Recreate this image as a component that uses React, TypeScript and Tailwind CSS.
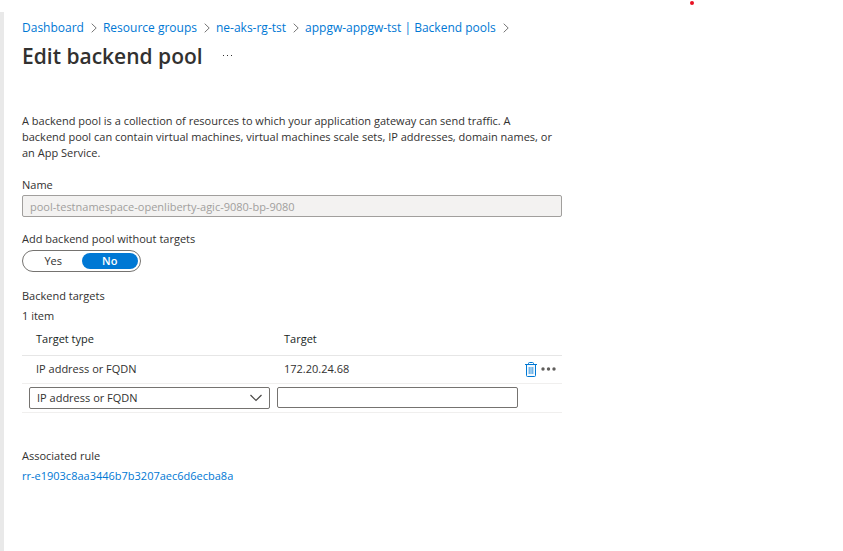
import { useState } from "react";

const crumbs = ["Dashboard", "Resource groups", "ne-aks-rg-tst", "appgw-appgw-tst | Backend pools"];

function CrumbArrow() {
  return (
    <svg className="h-[10px] w-[6px] shrink-0" viewBox="0 0 6 10" fill="none" stroke="#767676" aria-hidden="true">
      <path d="M0.7 0.7 L5.2 5 L0.7 9.3" />
    </svg>
  );
}

function Breadcrumb() {
  return (
    <nav aria-label="Breadcrumb">
      <ol className="flex flex-wrap text-[12px] leading-5 text-[#0078d4]">
        {crumbs.map((crumb) => (
          <li key={crumb} className="flex items-center gap-[7px] pr-[6px]">
            <a href="#" className="hover:underline">{crumb}</a>
            <CrumbArrow />
          </li>
        ))}
      </ol>
    </nav>
  );
}

function TrashIcon() {
  return (
    <svg className="h-[15px] w-[12px]" viewBox="0 0 12 15" fill="none" stroke="#0078d4" aria-hidden="true">
      <path d="M1.5 3 V13.5 a1 1 0 0 0 1 1 H9.5 a1 1 0 0 0 1 -1 V3" fill="#f3f9fe" />
      <path d="M0 2.5 H12" />
      <path d="M3.5 2.5 V1.5 a1 1 0 0 1 1 -1 H7.5 a1 1 0 0 1 1 1 V2.5" />
      <path d="M4.2 5 V12 M6 5 V12 M7.8 5 V12" strokeWidth="1" strokeOpacity="0.75" />
    </svg>
  );
}

function YesNoToggle() {
  const [value, setValue] = useState("No");
  return (
    <fieldset className="mt-[14px]">
      <legend className="leading-4">Add backend pool without targets</legend>
      <div className="mt-[3px] flex h-[22px] w-[119px] rounded-full border border-[#757370] p-[2px]">
        {["Yes", "No"].map((option) => (
          <label
            key={option}
            className="flex flex-1 cursor-pointer items-center justify-center rounded-full has-checked:bg-[#0078d4] has-checked:font-semibold has-checked:text-white"
          >
            <input
              type="radio"
              name="without-targets"
              className="sr-only"
              checked={value === option}
              onChange={() => setValue(option)}
            />
            {option}
          </label>
        ))}
      </div>
    </fieldset>
  );
}

function TargetsTable() {
  return (
    <table className="w-full table-fixed border-collapse text-left">
      <colgroup>
        <col className="w-[248px]" />
        <col className="w-[248px]" />
        <col />
      </colgroup>
      <thead>
        <tr className="h-[31px] border-b border-[#e6e6e6] text-[#201f1e]">
          <th className="pl-[14px] font-medium">Target type</th>
          <th className="pl-[14px] font-medium">Target</th>
          <td />
        </tr>
      </thead>
      <tbody>
        <tr className="h-7 border-b border-[#f0efee]">
          <td className="pl-[14px]">IP address or FQDN</td>
          <td className="pl-[14px]">172.20.24.68</td>
          <td>
            <div className="flex items-center gap-1 pl-[7px]">
              <button type="button" aria-label="Delete target"><TrashIcon /></button>
              <button type="button" aria-label="More actions">
                <svg className="h-[4px] w-[15px]" viewBox="0 0 15 4" fill="#605e5c" aria-hidden="true">
                  <circle cx="2" cy="2" r="1.7" />
                  <circle cx="7.5" cy="2" r="1.7" />
                  <circle cx="13" cy="2" r="1.7" />
                </svg>
              </button>
            </div>
          </td>
        </tr>
        <tr className="h-[29px] border-b border-[#f0efee]">
          <td className="pl-[7px]">
            <div className="grid items-center">
              <select
                aria-label="Target type"
                className="col-start-1 row-start-1 h-[22px] w-full appearance-none rounded-xs border border-[#757370] bg-white pl-[7px]"
              >
                <option>IP address or FQDN</option>
                <option>Virtual machine</option>
              </select>
              <svg
                className="pointer-events-none col-start-1 row-start-1 mr-2 h-[8px] w-[12px] justify-self-end"
                viewBox="0 0 12 8"
                fill="none"
                stroke="#484644"
                strokeWidth="1.2"
                aria-hidden="true"
              >
                <path d="M0.5 1 L6 6.5 L11.5 1" />
              </svg>
            </div>
          </td>
          <td className="pl-[7px]">
            <input
              type="text"
              aria-label="Target"
              className="block h-[21px] w-full rounded-xs border border-[#757370] bg-white px-[7px]"
            />
          </td>
          <td />
        </tr>
      </tbody>
    </table>
  );
}

export default function App() {
  return (
    <div className="relative min-h-screen bg-white pt-3 font-['Open_Sans','Noto_Sans',sans-serif] text-[11px] leading-4 text-[#323130]">
      <span className="absolute top-[1px] left-[690px] size-1 rounded-full bg-[#e81123]" />
      <main className="min-h-[calc(100vh-12px)] border-l-4 border-[#e9e9e9] pt-[6px] pr-4 pl-[18px]">
        <Breadcrumb />
        <header className="mt-1 flex items-center gap-5">
          <h1 className="text-[21px] leading-7 font-semibold">Edit backend pool</h1>
          <button type="button" aria-label="More options">
            <svg className="h-[2px] w-[10px]" viewBox="0 0 10 2" fill="#323130" aria-hidden="true">
              <path d="M0 0h1v1H0zM4 0h1v1H4zM8 0h1v1H8z" />
            </svg>
          </button>
        </header>
        <div className="mt-[43px] max-w-[540px]">
          <p className="pr-2">
            A backend pool is a collection of resources to which your application gateway can send traffic. A backend
            pool can contain virtual machines, virtual machines scale sets, IP addresses, domain names, or an App
            Service.
          </p>
          <label htmlFor="pool-name" className="mt-4 block">Name</label>
          <input
            id="pool-name"
            type="text"
            disabled
            value="pool-testnamespace-openliberty-agic-9080-bp-9080"
            className="mt-[2px] block h-[22px] w-full rounded-xs border border-[#a19f9d] bg-[#f3f2f1] px-[7px] text-[#a19f9d]"
          />
          <YesNoToggle />
          <h2 className="mt-4">Backend targets</h2>
          <p className="mt-1">1 item</p>
          <TargetsTable />
          <h2 className="mt-[35px]">Associated rule</h2>
          <a href="#" className="mt-1 block text-[#0078d4] hover:underline">rr-e1903c8aa3446b7b3207aec6d6ecba8a</a>
        </div>
      </main>
    </div>
  );
}
